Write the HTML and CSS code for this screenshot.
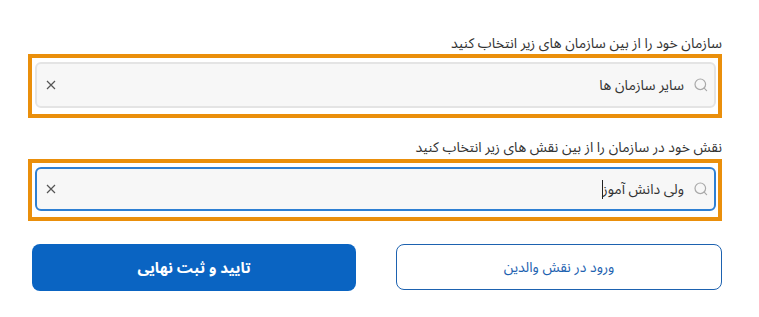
FILE: index.html
```html
<!DOCTYPE html>
<html lang="fa" dir="rtl">
<head>
<meta charset="utf-8">
<link rel="stylesheet" href="styles.css">
</head>
<body>
<div class="page">
  <div class="field-label">سازمان خود را از بین سازمان های زیر انتخاب کنید</div>
  <div class="highlight">
    <div class="select">
      <svg class="search" width="14" height="14" viewBox="0 0 14 14"><circle cx="6.3" cy="6.3" r="5.3" fill="none" stroke="#a9a9a9" stroke-width="1.2"/><path d="M10.2 10.2 L12.6 12.6" stroke="#a9a9a9" stroke-width="1.2" stroke-linecap="round"/></svg>
      <span class="value">سایر سازمان ها</span>
      <svg class="clear" width="10" height="10" viewBox="0 0 10 10"><path d="M1 1 L9 9 M9 1 L1 9" stroke="#555" stroke-width="1.2"/></svg>
    </div>
  </div>
  <div class="field-label second">نقش خود در سازمان را از بین نقش های زیر انتخاب کنید</div>
  <div class="highlight">
    <div class="select focused">
      <svg class="search" width="14" height="14" viewBox="0 0 14 14"><circle cx="6.3" cy="6.3" r="5.3" fill="none" stroke="#a9a9a9" stroke-width="1.2"/><path d="M10.2 10.2 L12.6 12.6" stroke="#a9a9a9" stroke-width="1.2" stroke-linecap="round"/></svg>
      <span class="value">ولی دانش آموز</span><span class="caret"></span>
      <svg class="clear" width="10" height="10" viewBox="0 0 10 10"><path d="M1 1 L9 9 M9 1 L1 9" stroke="#555" stroke-width="1.2"/></svg>
    </div>
  </div>
  <div class="actions">
    <button class="btn outline">ورود در نقش والدین</button>
    <button class="btn primary">تایید و ثبت نهایی</button>
  </div>
</div>
</body>
</html>
```
FILE: styles.css
```css
* { box-sizing: border-box; }
html, body { margin: 0; padding: 0; background: #fff; }
body {
  font-family: "Noto Sans Arabic", "DejaVu Sans", sans-serif;
  color: #333;
}
.page {
  width: 759px;
  padding: 34px 37px 0 28px;
}
.field-label {
  height: 20px;
  font-size: 14px;
  line-height: 20px;
  color: #333;
  white-space: nowrap;
}
.field-label.second {
  margin-top: 20px;
  height: 21px;
}
.highlight {
  border: 4px solid #ea8f0b;
  padding: 4px 2px 6px 3px;
}
.select {
  height: 46px;
  display: flex;
  align-items: center;
  background: #f7f7f7;
  border: 2px solid #e4e4e4;
  border-radius: 6px;
  padding: 0 6px 0 0;
}
.select.focused {
  height: 44px;
  border-color: #2d7fd3;
}
.highlight:last-of-type { padding-bottom: 4px; }
.search { flex: none; margin-left: 10px; }
.value { font-size: 14px; color: #333; }
.caret {
  width: 1px;
  height: 19px;
  background: #222;
}
.clear { flex: none; margin-right: auto; margin-left: 9px; }
.actions {
  display: flex;
  gap: 40px;
  margin-top: 23px;
  padding-left: 4px;
}
.btn {
  flex: 1;
  height: 46px;
  border-radius: 8px;
  font-family: "Noto Sans Arabic", "DejaVu Sans", sans-serif;
  font-size: 14px;
  cursor: pointer;
}
.btn.outline {
  background: #fff;
  border: 1px solid #1d62b0;
  color: #1d62b0;
}
.btn.primary {
  background: #0a64c2;
  border: none;
  color: #fff;
  font-weight: bold;
  font-size: 15px;
  height: 47px;
}
```
